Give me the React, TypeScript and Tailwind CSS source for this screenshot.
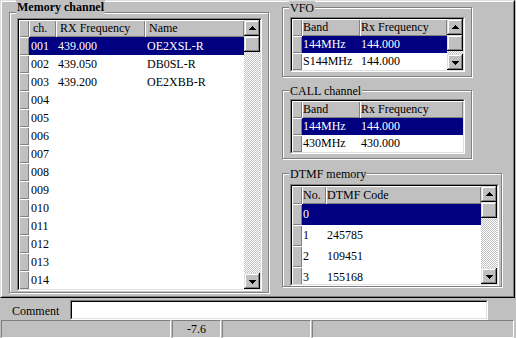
import React from "react";

const BTN =
  "bg-[#c0c0c0] shadow-[inset_-1px_-1px_#000,inset_1px_1px_#dfdfdf,inset_-2px_-2px_#808080,inset_2px_2px_#fff]";
const CELL = "bg-[#c0c0c0] shadow-[inset_1px_1px_#fff,inset_-1px_-1px_#808080]";
const CHECK =
  "[background-image:repeating-conic-gradient(#c0c0c0_0%_25%,#ffffff_0%_50%)] [background-size:2px_2px]";

function Arrow({ up }: { up: boolean }) {
  const widths = up ? [1, 3, 5, 7] : [7, 5, 3, 1];
  return (
    <svg width="7" height="4" shapeRendering="crispEdges">
      {widths.map((w, i) => (
        <rect key={i} x={(7 - w) / 2} y={i} width={w} height={1} fill="#000" />
      ))}
    </svg>
  );
}

function ScrollBar() {
  return (
    <div className="flex h-full w-[16px] shrink-0 flex-col">
      <div className={`${BTN} flex h-[16px] w-[16px] shrink-0 items-center justify-center`}>
        <Arrow up />
      </div>
      <div className={`${BTN} h-[16px] w-[16px] shrink-0`} />
      <div className={`${CHECK} min-h-0 flex-1`} />
      <div className={`${BTN} flex h-[16px] w-[16px] shrink-0 items-center justify-center pt-[1px]`}>
        <Arrow up={false} />
      </div>
    </div>
  );
}

function Sunken({ className, children }: { className?: string; children: React.ReactNode }) {
  return (
    <div className={`border border-t-[#808080] border-l-[#808080] border-b-white border-r-white ${className ?? ""}`}>
      <div className="flex h-full border border-t-black border-l-black border-b-[#dfdfdf] border-r-[#dfdfdf] bg-white">
        {children}
      </div>
    </div>
  );
}

function Group({
  title,
  bold,
  top,
  className,
  children,
}: {
  title: string;
  bold?: boolean;
  top: string;
  className: string;
  children: React.ReactNode;
}) {
  return (
    <div className={`relative shrink-0 border border-[#808080] shadow-[1px_1px_0_#fff,inset_1px_1px_0_#fff] ${className}`}>
      <span
        className={`absolute left-[6px] ${top} bg-[#c0c0c0] px-[1px] leading-[14px] text-black ${bold ? "font-bold" : ""}`}
      >
        {title}
      </span>
      {children}
    </div>
  );
}

type Col = { label: string; w: string };

function Table({
  cols,
  rows,
  rowH,
  headH,
  headPad,
  cellPad,
  selected,
}: {
  cols: Col[];
  rows: string[][];
  rowH: string;
  headH: string;
  headPad: string;
  cellPad: string;
  selected: number;
}) {
  return (
    <div className="flex min-w-0 flex-1 flex-col overflow-hidden">
      <div className={`flex ${headH} shrink-0`}>
        <div className={`${CELL} w-[10px] shrink-0`} />
        {cols.map((c, i) => (
          <div key={i} className={`${CELL} ${c.w} shrink-0 ${headPad} whitespace-nowrap`}>
            {c.label}
          </div>
        ))}
        <div className={`${CELL} flex-1`} />
      </div>
      {rows.map((r, ri) => (
        <div key={ri} className={`flex ${rowH} shrink-0`}>
          <div className={`${CELL} w-[10px] shrink-0`} />
          <div className={`flex flex-1 ${ri === selected ? "bg-[#000080] text-white" : "bg-white text-black"}`}>
            {cols.map((c, ci) => (
              <div key={ci} className={`${c.w} shrink-0 ${cellPad} whitespace-nowrap`}>
                {r[ci] ?? ""}
              </div>
            ))}
          </div>
        </div>
      ))}
    </div>
  );
}

export default function App() {
  const memRows: string[][] = [
    ["001", "439.000", "OE2XSL-R"],
    ["002", "439.050", "DB0SL-R"],
    ["003", "439.200", "OE2XBB-R"],
    ...["004", "005", "006", "007", "008", "009", "010", "011", "012", "013", "014"].map((n) => [n]),
  ];

  return (
    <div className="flex h-[338px] w-[516px] flex-col overflow-hidden bg-[#c0c0c0] font-['Liberation_Serif',serif] text-[12px] text-black">
      {/* top panel */}
      <div className="h-[298px] w-[515px] shrink-0 border border-t-[#dfdfdf] border-l-[#dfdfdf] border-b-black border-r-black">
        <div className="flex h-full border border-t-white border-l-white border-b-[#808080] border-r-[#808080]">
          {/* left */}
          <div className="pl-[7px] pt-[10px]">
            <Group title="Memory channel" bold top="top-[-13px]" className="h-[281px] w-[260px] pl-[7px] pt-[5px]">
              <Sunken className="h-[273px] w-[245px]">
                <Table
                  cols={[
                    { label: "ch.", w: "w-[27px]" },
                    { label: "RX Frequency", w: "w-[89px]" },
                    { label: "Name", w: "w-[99px]" },
                  ]}
                  rows={memRows}
                  rowH="h-[18px] leading-[18px]"
                  headH="h-[17px] leading-[17px]"
                  headPad="pl-[4px]"
                  cellPad="pl-[2px]"
                  selected={0}
                />
                <ScrollBar />
              </Sunken>
            </Group>
          </div>
          {/* right */}
          <div className="ml-[13px] flex flex-col pt-[5px]">
            <Group title="VFO" top="top-[-7px]" className="h-[70px] w-[190px] pl-[7px] pt-[9px]">
              <Sunken className="h-[55px] w-[175px]">
                <Table
                  cols={[
                    { label: "Band", w: "w-[58px]" },
                    { label: "Rx Frequency", w: "w-[87px]" },
                  ]}
                  rows={[
                    ["144MHz", "144.000"],
                    ["S144MHz", "144.000"],
                  ]}
                  rowH="h-[17px] leading-[17px]"
                  headH="h-[17px] leading-[17px]"
                  headPad="pl-[1px]"
                  cellPad="pl-[1px]"
                  selected={0}
                />
                <ScrollBar />
              </Sunken>
            </Group>
            <Group title="CALL channel" top="top-[-7px]" className="mt-[13px] h-[69px] w-[190px] pl-[7px] pt-[8px]">
              <Sunken className="h-[55px] w-[175px]">
                <Table
                  cols={[
                    { label: "Band", w: "w-[58px]" },
                    { label: "Rx Frequency", w: "w-[103px]" },
                  ]}
                  rows={[
                    ["144MHz", "144.000"],
                    ["430MHz", "430.000"],
                  ]}
                  rowH="h-[17px] leading-[17px]"
                  headH="h-[17px] leading-[17px]"
                  headPad="pl-[1px]"
                  cellPad="pl-[1px]"
                  selected={0}
                />
              </Sunken>
            </Group>
            <Group title="DTMF memory" top="top-[-7px]" className="mt-[14px] h-[114px] w-[220px] pl-[7px] pt-[10px]">
              <Sunken className="h-[102px] w-[209px]">
                <Table
                  cols={[
                    { label: "No.", w: "w-[24px]" },
                    { label: "DTMF Code", w: "w-[155px]" },
                  ]}
                  rows={[
                    ["0", ""],
                    ["1", "245785"],
                    ["2", "109451"],
                    ["3", "155168"],
                  ]}
                  rowH="h-[21px] leading-[21px]"
                  headH="h-[18px] leading-[18px]"
                  headPad="pl-[1px]"
                  cellPad="pl-[1px]"
                  selected={0}
                />
                <ScrollBar />
              </Sunken>
            </Group>
          </div>
        </div>
      </div>
      {/* comment row */}
      <div className="flex h-[22px] shrink-0 items-start">
        <div className="pl-[12px] pt-[6px] leading-[14px]">Comment</div>
        <div className="ml-[11px] mt-[2px] h-[20px] w-[418px] border border-t-[#808080] border-l-[#808080] border-b-white border-r-white">
          <div className="h-full border border-t-black border-l-black border-b-[#dfdfdf] border-r-[#dfdfdf] bg-white" />
        </div>
      </div>
      {/* status bar */}
      <div className="flex h-[18px] shrink-0 gap-[1px] pl-[1px]">
        <div className="h-full w-[170px] border border-t-[#808080] border-l-[#808080] border-b-white border-r-white" />
        <div className="flex h-full w-[49px] items-center justify-center border border-t-[#808080] border-l-[#808080] border-b-white border-r-white leading-[14px]">
          -7.6
        </div>
        <div className="h-full w-[89px] border border-t-[#808080] border-l-[#808080] border-b-white border-r-white" />
        <div className="h-full w-[202px] border border-t-[#808080] border-l-[#808080] border-b-white border-r-white" />
      </div>
    </div>
  );
}
